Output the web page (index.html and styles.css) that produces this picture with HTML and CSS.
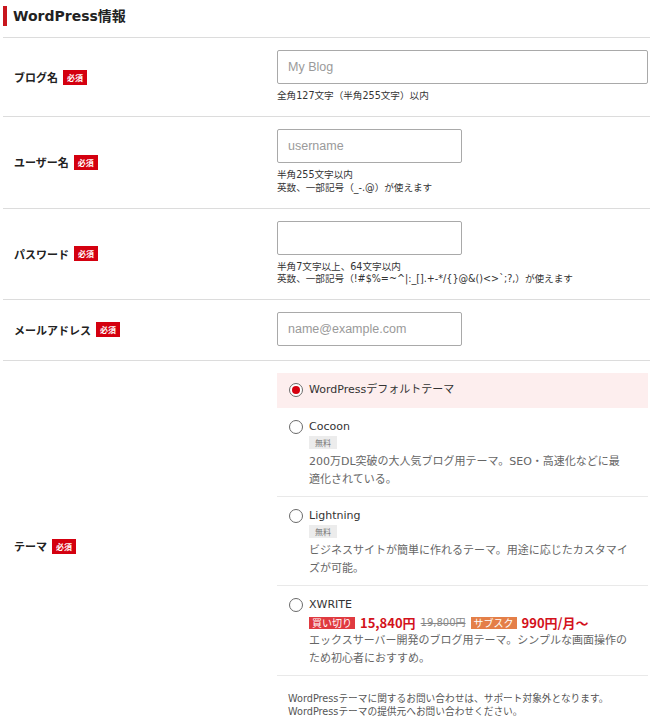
FILE: index.html
```html
<!DOCTYPE html>
<html lang="ja">
<head>
<meta charset="utf-8">
<title>WordPress情報</title>
<link rel="stylesheet" href="styles.css">
</head>
<body>
<div class="page">
  <h2 class="section-title"><span class="section-title__text">WordPress情報</span></h2>

  <div class="form-row">
    <div class="form-label">ブログ名<span class="req">必須</span></div>
    <div class="form-field">
      <input class="text-input text-input--wide" type="text" placeholder="My Blog">
      <p class="hint">全角127文字（半角255文字）以内</p>
    </div>
  </div>

  <div class="form-row">
    <div class="form-label">ユーザー名<span class="req">必須</span></div>
    <div class="form-field">
      <input class="text-input" type="text" placeholder="username">
      <p class="hint">半角255文字以内<br>英数、一部記号（_-.@）が使えます</p>
    </div>
  </div>

  <div class="form-row">
    <div class="form-label">パスワード<span class="req">必須</span></div>
    <div class="form-field">
      <input class="text-input" type="password">
      <p class="hint">半角7文字以上、64文字以内<br>英数、一部記号（!#$%=~^|:_[].+-*/{}@&amp;()&lt;&gt;`;?,）が使えます</p>
    </div>
  </div>

  <div class="form-row">
    <div class="form-label">メールアドレス<span class="req">必須</span></div>
    <div class="form-field">
      <input class="text-input" type="text" placeholder="name@example.com">
    </div>
  </div>

  <div class="form-row form-row--theme">
    <div class="form-label">テーマ<span class="req">必須</span></div>
    <div class="form-field form-field--theme">
      <ul class="theme-list">
        <li class="theme-item theme-item--selected">
          <span class="radio radio--checked"></span>
          <div class="theme-body">
            <div class="theme-name">WordPressデフォルトテーマ</div>
          </div>
        </li>
        <li class="theme-item">
          <span class="radio"></span>
          <div class="theme-body">
            <div class="theme-name">Cocoon</div>
            <div class="theme-meta"><span class="free-tag">無料</span></div>
            <p class="theme-desc">200万DL突破の大人気ブログ用テーマ。SEO・高速化などに最適化されている。</p>
          </div>
        </li>
        <li class="theme-item">
          <span class="radio"></span>
          <div class="theme-body">
            <div class="theme-name">Lightning</div>
            <div class="theme-meta"><span class="free-tag">無料</span></div>
            <p class="theme-desc">ビジネスサイトが簡単に作れるテーマ。用途に応じたカスタマイズが可能。</p>
          </div>
        </li>
        <li class="theme-item">
          <span class="radio"></span>
          <div class="theme-body">
            <div class="theme-name">XWRITE</div>
            <div class="price-row">
              <span class="price-tag price-tag--buy">買い切り</span>
              <span class="price">15,840円</span>
              <span class="price-old">19,800円</span>
              <span class="price-tag price-tag--sub">サブスク</span>
              <span class="price">990円/月〜</span>
            </div>
            <p class="theme-desc">エックスサーバー開発のブログ用テーマ。シンプルな画面操作のため初心者におすすめ。</p>
          </div>
        </li>
      </ul>
      <p class="theme-note">WordPressテーマに関するお問い合わせは、サポート対象外となります。<br>WordPressテーマの提供元へお問い合わせください。</p>
    </div>
  </div>
</div>
</body>
</html>
```

FILE: styles.css
```css
* {
  box-sizing: border-box;
}

html, body {
  margin: 0;
  padding: 0;
  background: #fff;
}

body {
  font-family: "DejaVu Sans", "Noto Sans CJK JP", sans-serif;
  color: #333;
}

.page {
  padding-left: 3px;
}

.section-title {
  margin: 0;
  padding: 6px 0 11px;
  border-bottom: 1px solid #dcdcdc;
  font-size: 14px;
  line-height: 20px;
  font-weight: bold;
  color: #222;
}

.section-title__text {
  display: block;
  border-left: 4px solid #c8161d;
  padding-left: 6px;
}

.form-row {
  display: grid;
  grid-template-columns: 274px 1fr;
  border-bottom: 1px solid #dcdcdc;
}

.form-label {
  align-self: center;
  display: flex;
  align-items: center;
  padding-left: 11px;
  font-family: "Noto Sans CJK JP", sans-serif;
  font-size: 11px;
  font-weight: bold;
  color: #222;
  line-height: 16px;
}

.req {
  display: inline-block;
  margin-left: 5px;
  padding: 0 4px;
  height: 15px;
  line-height: 15px;
  background: #d4000f;
  color: #fff;
  font-size: 8px;
  font-weight: bold;
}

.form-field {
  padding: 12px 2px 13.5px 0;
}

.text-input {
  display: block;
  width: 185px;
  height: 34px;
  margin: 0;
  padding: 0 10px;
  border: 1px solid #a9a9a9;
  border-radius: 2px;
  font-family: "Liberation Sans", Arial, sans-serif;
  font-size: 12.5px;
  color: #333;
  background: #fff;
}

.text-input::placeholder {
  color: #9a9a9a;
}

.text-input--wide {
  width: 100%;
}

.hint {
  margin: 6px 0 0;
  font-family: "DejaVu Sans", "Noto Sans CJK JP", sans-serif;
  font-size: 9.6px;
  line-height: 12.5px;
  color: #333;
}

.form-field--theme {
  padding-top: 12px;
  padding-bottom: 14px;
}

.theme-list {
  list-style: none;
  margin: 0;
  padding: 0;
}

.theme-item {
  display: flex;
  align-items: flex-start;
  padding: 10px 19px 7px 12px;
  border-bottom: 1px solid #e9e9e9;
}

.theme-item--selected {
  background: #fdeeee;
  border-bottom-color: transparent;
  padding-top: 8px;
  padding-bottom: 8px;
}

.radio {
  flex: none;
  position: relative;
  width: 14px;
  height: 14px;
  margin: 2px 6px 0 0;
  border: 1px solid #6a6a6a;
  border-radius: 50%;
  background: #fff;
}

.radio--checked::after {
  content: "";
  position: absolute;
  left: 2px;
  top: 2px;
  width: 8px;
  height: 8px;
  border-radius: 50%;
  background: #d6000f;
}

.theme-body {
  flex: 1;
  min-width: 0;
}

.theme-name {
  font-size: 11px;
  line-height: 18px;
  color: #333;
}

.theme-meta {
  display: flex;
  margin-bottom: 4px;
}

.free-tag {
  display: inline-block;
  height: 13px;
  line-height: 13px;
  padding: 0 6px;
  background: #ececec;
  color: #777;
  font-family: "Noto Sans CJK JP", sans-serif;
  font-size: 8px;
}

.theme-desc {
  margin: 0;
  font-family: "DejaVu Sans", "Noto Sans CJK JP", sans-serif;
  font-size: 11px;
  line-height: 18px;
  color: #666;
}

.price-row {
  display: flex;
  align-items: center;
  gap: 5px;
  height: 18px;
  font-family: "Noto Sans CJK JP", sans-serif;
}

.price-tag {
  display: inline-block;
  height: 12px;
  line-height: 12px;
  padding: 0 3px;
  color: #fff;
  font-size: 10px;
}

.price-tag--buy {
  background: #e03a40;
}

.price-tag--sub {
  background: #e47f48;
}

.price {
  font-size: 13px;
  font-weight: bold;
  color: #d3121c;
  line-height: 18px;
}

.price-old {
  font-family: "DejaVu Sans", "Noto Sans CJK JP", sans-serif;
  font-size: 10px;
  color: #888;
  text-decoration: line-through;
  line-height: 18px;
}

.theme-note {
  margin: 16px 0 0 11px;
  font-family: "DejaVu Sans", "Noto Sans CJK JP", sans-serif;
  font-size: 9.7px;
  line-height: 13px;
  color: #555;
}
```
